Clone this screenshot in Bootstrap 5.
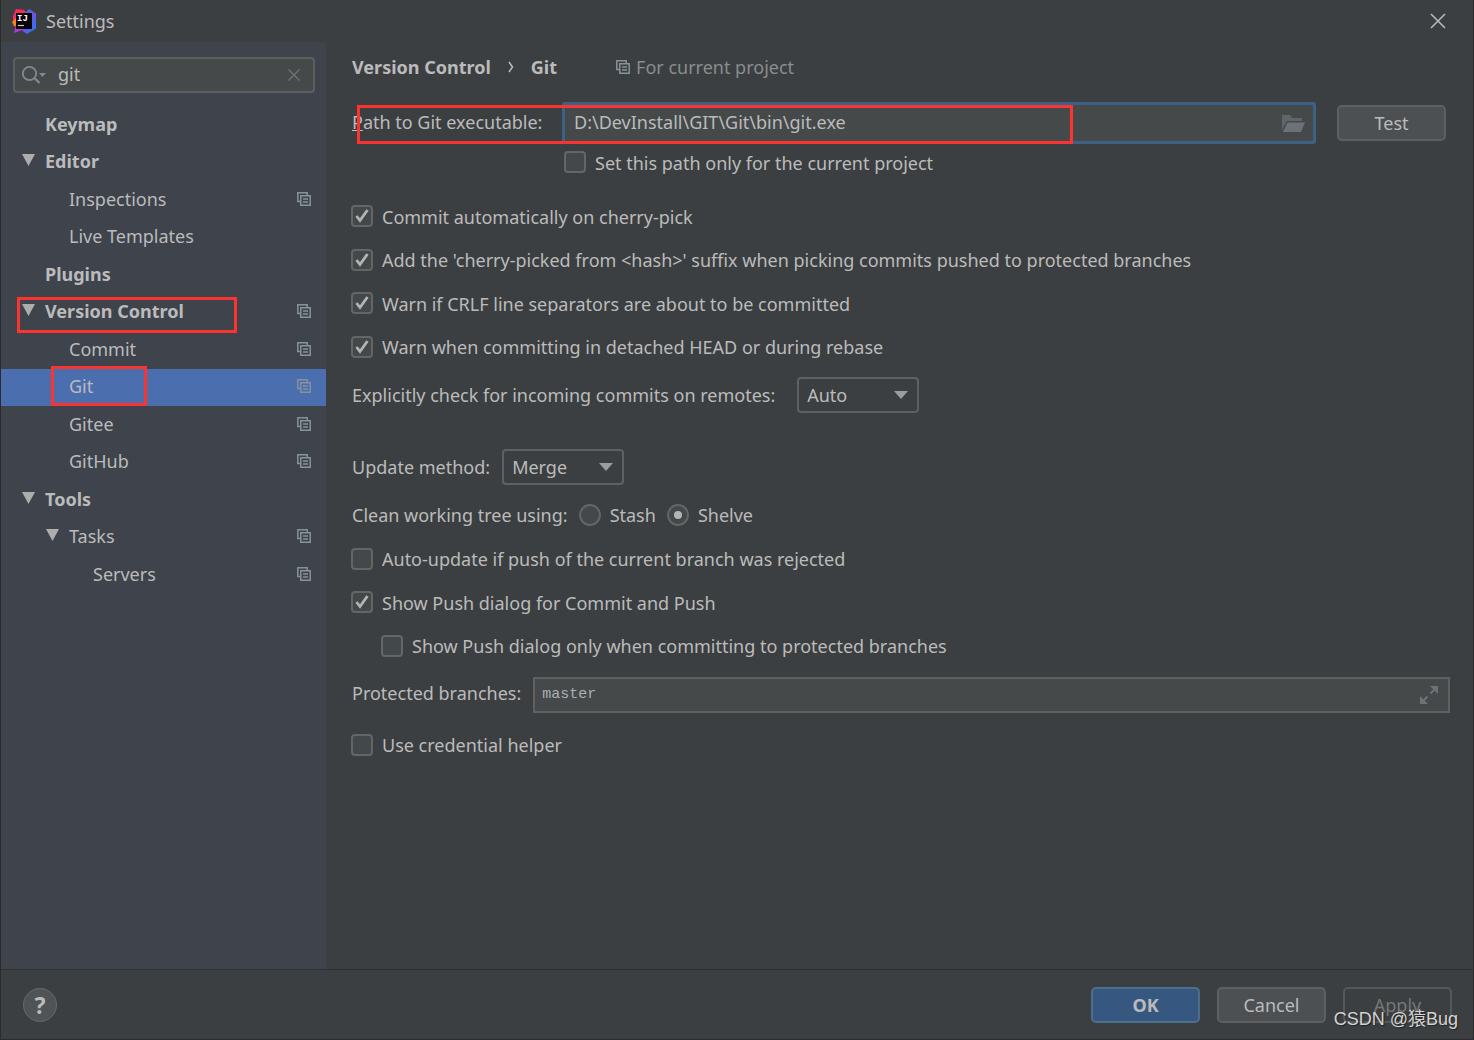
<!DOCTYPE html>
<html lang="en" data-bs-theme="dark">
<head>
<meta charset="utf-8">
<meta name="viewport" content="width=device-width, initial-scale=1">
<title>Settings</title>
<link rel="stylesheet" href="https://cdn.jsdelivr.net/npm/bootstrap@5.3.0/dist/css/bootstrap.min.css">
<style>
  :root {
    --ui-bg: #3c3f41;
    --ui-side: #3e434c;
    --ui-field: #45494a;
    --ui-line: #5f6061;
    --ui-text: #bbbbbb;
    --ui-mark: #fb3432;
  }
  body {
    background: var(--ui-bg);
    color: var(--ui-text);
    font-family: "Noto Sans", "Open Sans", "Noto Sans CJK SC", sans-serif;
    font-size: 18px;
    line-height: 26px;
    border: 1px solid #2b2b2c;
    border-top: 0;
  }
  .title-bar { height: 42px; padding: 0 27px 0 11px; }
  .title-bar .app-logo { margin-right: 9px; }
  .icon-btn { background: none; border: 0; padding: 0; line-height: 0; color: inherit; }

  .side-pane { width: 325px; background: var(--ui-side); padding-top: 15px; }
  .search-box {
    height: 36px; margin: 0 11px 13px 12px; padding: 0 13px 0 7px;
    background: var(--ui-field); border: 2px solid #5c5f60; border-radius: 4px;
  }
  .search-box input {
    background: none; border: 0; outline: 0; color: var(--ui-text); padding: 0 0 2px; min-width: 0;
  }
  .search-box .magnifier { margin-right: 12px; }
  .tree { display: grid; grid-auto-rows: 38px 37px; list-style: none; margin: 0; padding: 0; }
  .tree li { position: relative; }
  .tree a {
    display: flex; align-items: center; height: 100%;
    padding: 0 15px 3px 44px; color: inherit; text-decoration: none;
  }
  .tree .depth-2 a { padding-left: 68px; }
  .tree .depth-3 a { padding-left: 92px; }
  .tree .depth-1 a { font-weight: 700; }
  .tree .selected { background: #4b6eaf; }
  .tree .copy-icon { margin-left: auto; }
  .tree .twisty { width: 13px; height: 12px; margin: 0 10px 2px -23px; fill: #adadad; }

  .marker { position: absolute; border: 3px solid var(--ui-mark); pointer-events: none; }
  .marker-section { left: 16px; top: 3px; width: 220px; height: 36px; z-index: 1; }
  .marker-item { left: 50px; top: -3px; width: 96px; height: 40px; z-index: 1; }
  .marker-path { left: 5px; top: 3px; width: 716px; height: 39px; z-index: 2; }

  .main-pane { padding: 0 23px 0 26px; min-width: 0; }
  .crumbs { height: 50px; margin-bottom: 10px; }
  .crumbs .chevron { margin: 0 17px; }
  .crumbs .hint { color: #8a8c8d; margin-left: 59px; gap: 6px; }
  .path-row { position: relative; padding-right: 4px; }
  .path-label { width: 210px; padding-bottom: 2px; }
  .path-field {
    height: 42px; border: 3px solid #3d6185; border-radius: 3px;
    background: var(--ui-field); padding: 0 8px 0 9px; margin-right: 21px;
  }
  .path-field input {
    background: none; border: 0; outline: 0; padding: 0 0 2px; color: var(--ui-text); min-width: 0;
  }
  .opt-grid { display: grid; grid-auto-rows: 43px 44px; }
  .opt-grid.late { grid-auto-rows: 44px 43px; }
  .opt { display: flex; align-items: center; gap: 9px; margin: 0; }
  .opt-nested { padding-left: 30px; }
  .opt-path { height: 37px; padding-left: 213px; margin-bottom: 14px; }
  .form-check-input, .form-check-input:checked {
    flex: none; width: 22px; height: 22px; margin: 0 0 1px -1px;
    background-color: #43494a; border: 2px solid #636566;
  }
  .form-check-input[type=checkbox] { border-radius: 4px; }
  .form-check-input:checked[type=checkbox] {
    background-size: 18px 18px;
    background-image: url("data:image/svg+xml,%3csvg xmlns='http://www.w3.org/2000/svg' viewBox='0 0 18 18'%3e%3cpath d='M3.5 9l3.5 4.5L14.5 3' fill='none' stroke='%23b4b4b4' stroke-width='2.8'/%3e%3c/svg%3e");
  }
  .form-check-input:checked[type=radio] {
    background-size: 18px 18px;
    background-image: url("data:image/svg+xml,%3csvg xmlns='http://www.w3.org/2000/svg' viewBox='0 0 18 18'%3e%3ccircle cx='9' cy='9' r='4' fill='%23b4b4b4'/%3e%3c/svg%3e");
  }
  .field-row { display: flex; align-items: center; height: 44px; gap: 12px; }
  .incoming-row { margin-top: 4px; gap: 22px; }
  .update-row { margin: 28px 0 4px; }
  .branches-row { margin: 5px 0 15px; }
  .branches-row label { padding-bottom: 4px; }
  .form-select {
    width: 122px; height: 36px; padding: 0 30px 0 8px; font-size: 18px; line-height: 26px;
    color: var(--ui-text); background-color: var(--ui-bg);
    border: 2px solid var(--ui-line); border-radius: 4px;
    background-position: right 9px center; background-size: 14px 8px;
    background-image: url("data:image/svg+xml,%3csvg xmlns='http://www.w3.org/2000/svg' viewBox='0 0 14 8'%3e%3cpath d='M0 0h14L7 8z' fill='%239a9da0'/%3e%3c/svg%3e");
  }
  .branches-field {
    height: 36px; background: var(--ui-field); border: 2px solid var(--ui-line);
    padding: 0 10px 0 7px;
  }
  .branches-field input {
    background: none; border: 0; outline: 0; padding: 0; min-width: 0;
    color: #a9b0b4; font: 15px/22px "Liberation Mono", monospace;
  }

  .ui-btn {
    width: 109px; height: 36px; padding: 0; font-size: 18px; line-height: 32px;
    color: var(--ui-text); background: #4c5052; border: 2px solid #5e6060; border-radius: 5px;
  }
  .ui-btn.primary { background: #365880; border-color: #4c708c; font-weight: 700; }
  .ui-btn:disabled { background: none; color: #777777; border-color: #55585a; opacity: 1; }
  .foot-bar { border-top: 1px solid #2f3234; height: 70px; padding: 0 21px 0 22px; gap: 17px; }
  .help-btn {
    width: 34px; height: 34px; padding: 0; border-radius: 50%; border: 1px solid #66696a;
    background: #4f5355; color: var(--ui-text); font-weight: 700; font-size: 23px; line-height: 30px;
  }
  .watermark {
    position: absolute; right: 15px; bottom: 7px; font: 18px/26px "Liberation Sans", "Noto Sans CJK SC", sans-serif;
    color: #d2d3d3; text-shadow: 1px 1px 1px #222; pointer-events: none;
  }
</style>
<script src="https://cdn.jsdelivr.net/npm/bootstrap@5.3.0/dist/js/bootstrap.bundle.min.js"></script>
</head>
<body class="d-flex flex-column min-vh-100">

<svg class="d-none" aria-hidden="true">
  <symbol id="copy" viewBox="0 0 14 14">
    <path d="M3 9.500H.8V.8h9.400V3" fill="none" stroke="#87939a" stroke-width="1.500"/>
    <path d="M3.800 3.800h9.400v9.400H3.800z" fill="none" stroke="#87939a" stroke-width="1.500"/>
    <path d="M6 7h5M6 10h5" stroke="#87939a" stroke-width="1.400"/>
  </symbol>
  <symbol id="twisty" viewBox="0 0 13 12"><path d="M0 0h13L6.500 12z"/></symbol>
</svg>

<header class="title-bar d-flex align-items-center">
  <svg class="app-logo" width="25" height="25" viewBox="0 0 25 25" aria-hidden="true">
    <defs>
      <linearGradient id="blue" x1="0" y1="0" x2="1" y2="1"><stop offset="0" stop-color="#2f7df6"/><stop offset=".5" stop-color="#6a57e0"/><stop offset="1" stop-color="#1c7cf5"/></linearGradient>
      <linearGradient id="pink" x1="0" y1="0" x2="0" y2="1"><stop offset="0" stop-color="#fe2857"/><stop offset="1" stop-color="#e8326b"/></linearGradient>
    </defs>
    <path d="M13 4l4-4 7 4.500v15L15 25l-7-5z" fill="url(#blue)"/>
    <path d="M1 7L4 0l8 1 4 5-10 8-5-1z" fill="url(#pink)"/>
    <path d="M4 9l-4 4 2 4 4 1z" fill="#fc801d"/>
    <path d="M4 16l-2 8 8-3 3-3z" fill="#b736d9"/>
    <path d="M4 4h16v16H4z" fill="#08040a"/>
    <text x="5" y="12" font-family="Liberation Mono, monospace" font-weight="700" font-size="9" fill="#fff">IJ</text>
    <path d="M6 16.500h6" stroke="#c9c9c9" stroke-width="1.200"/>
  </svg>
  <span class="flex-fill">Settings</span>
  <button class="icon-btn" type="button" aria-label="Close">
    <svg width="16" height="16" viewBox="0 0 16 16"><path d="M1 1l14 14M15 1L1 15" stroke="#bbb" stroke-width="1.500"/></svg>
  </button>
</header>

<div class="d-flex flex-fill">
  <nav class="side-pane flex-shrink-0" aria-label="Settings sections">
    <div class="search-box d-flex align-items-center">
      <svg class="magnifier flex-shrink-0" width="24" height="20" viewBox="0 0 24 20" aria-hidden="true">
        <circle cx="7.500" cy="8.500" r="6.700" fill="none" stroke="#7f8b91" stroke-width="1.800"/>
        <path d="M12.500 13l5 5" stroke="#7f8b91" stroke-width="2.200"/>
        <path d="M17 8h7l-3.500 4z" fill="#7f8b91"/>
      </svg>
      <input class="flex-fill" type="text" value="git" aria-label="Search settings">
      <button class="icon-btn" type="button" aria-label="Clear">
        <svg width="12" height="12" viewBox="0 0 12 12"><path d="M.5.5l11 11M11.500.5l-11 11" stroke="#6e7375" stroke-width="1.400"/></svg>
      </button>
    </div>
    <ul class="tree">
      <li class="depth-1"><a href="#">Keymap</a></li>
      <li class="depth-1"><a href="#"><svg class="twisty"><use href="#twisty"/></svg>Editor</a></li>
      <li class="depth-2"><a href="#">Inspections<svg class="copy-icon" width="14" height="14"><use href="#copy"/></svg></a></li>
      <li class="depth-2"><a href="#">Live Templates</a></li>
      <li class="depth-1"><a href="#">Plugins</a></li>
      <li class="depth-1"><a href="#"><svg class="twisty"><use href="#twisty"/></svg>Version Control<svg class="copy-icon" width="14" height="14"><use href="#copy"/></svg></a><span class="marker marker-section"></span></li>
      <li class="depth-2"><a href="#">Commit<svg class="copy-icon" width="14" height="14"><use href="#copy"/></svg></a></li>
      <li class="depth-2 selected"><a href="#" aria-current="page">Git<svg class="copy-icon" width="14" height="14"><use href="#copy"/></svg></a><span class="marker marker-item"></span></li>
      <li class="depth-2"><a href="#">Gitee<svg class="copy-icon" width="14" height="14"><use href="#copy"/></svg></a></li>
      <li class="depth-2"><a href="#">GitHub<svg class="copy-icon" width="14" height="14"><use href="#copy"/></svg></a></li>
      <li class="depth-1"><a href="#"><svg class="twisty"><use href="#twisty"/></svg>Tools</a></li>
      <li class="depth-2"><a href="#"><svg class="twisty"><use href="#twisty"/></svg>Tasks<svg class="copy-icon" width="14" height="14"><use href="#copy"/></svg></a></li>
      <li class="depth-3"><a href="#">Servers<svg class="copy-icon" width="14" height="14"><use href="#copy"/></svg></a></li>
    </ul>
  </nav>

  <main class="main-pane flex-fill">
    <div class="crumbs d-flex align-items-center">
      <strong>Version Control</strong>
      <svg class="chevron" width="6" height="12" viewBox="0 0 6 12" aria-hidden="true"><path d="M1 1l3.500 5L1 11" fill="none" stroke="#bbb" stroke-width="1.500"/></svg>
      <strong>Git</strong>
      <span class="hint d-flex align-items-center"><svg width="14" height="14"><use href="#copy"/></svg>For current project</span>
    </div>

    <div class="path-row d-flex align-items-center">
      <label class="path-label flex-shrink-0" for="git-path"><u>P</u>ath to Git executable:</label>
      <div class="path-field d-flex align-items-center flex-fill">
        <input class="flex-fill" id="git-path" type="text" value="D:\DevInstall\GIT\Git\bin\git.exe">
        <button class="icon-btn" type="button" aria-label="Browse">
          <svg width="23" height="17" viewBox="0 0 23 17"><path d="M0 0h8l2 3h10v3H5L0 15z" fill="#5f666a"/><path d="M5.500 7.500H23L19 17H1z" fill="#6b7378"/></svg>
        </button>
      </div>
      <button class="ui-btn btn flex-shrink-0" type="button">Test</button>
      <span class="marker marker-path"></span>
    </div>
    <label class="opt opt-path"><input class="form-check-input" type="checkbox">Set this path only for the current project</label>

    <div class="opt-grid">
      <label class="opt"><input class="form-check-input" type="checkbox" checked>Commit automatically on cherry-pick</label>
      <label class="opt"><input class="form-check-input" type="checkbox" checked>Add the 'cherry-picked from &lt;hash&gt;' suffix when picking commits pushed to protected branches</label>
      <label class="opt"><input class="form-check-input" type="checkbox" checked>Warn if CRLF line separators are about to be committed</label>
      <label class="opt"><input class="form-check-input" type="checkbox" checked>Warn when committing in detached HEAD or during rebase</label>
    </div>

    <div class="field-row incoming-row">
      <label for="incoming">Explicitly check for incoming commits on remotes:</label>
      <select class="form-select" id="incoming"><option>Auto</option><option>Always</option><option>Never</option></select>
    </div>
    <div class="field-row update-row">
      <label for="update">Update method:</label>
      <select class="form-select" id="update"><option>Merge</option><option>Rebase</option></select>
    </div>
    <div class="field-row" role="radiogroup" aria-label="Clean working tree using">
      <span>Clean working tree using:</span>
      <label class="opt"><input class="form-check-input" type="radio" name="clean">Stash</label>
      <label class="opt"><input class="form-check-input" type="radio" name="clean" checked>Shelve</label>
    </div>

    <div class="opt-grid late">
      <label class="opt"><input class="form-check-input" type="checkbox">Auto-update if push of the current branch was rejected</label>
      <label class="opt"><input class="form-check-input" type="checkbox" checked>Show Push dialog for Commit and Push</label>
      <label class="opt opt-nested"><input class="form-check-input" type="checkbox">Show Push dialog only when committing to protected branches</label>
    </div>

    <div class="field-row branches-row">
      <label class="flex-shrink-0" for="branches">Protected branches:</label>
      <div class="branches-field d-flex align-items-center flex-fill">
        <input class="flex-fill" id="branches" type="text" value="master">
        <button class="icon-btn" type="button" aria-label="Expand">
          <svg width="18" height="18" viewBox="0 0 18 18"><path d="M10 0h8v8zM0 10v8h8z" fill="#6b7378"/><path d="M10.500 7.500L15 3M3 15l4.500-4.500" stroke="#6b7378" stroke-width="2"/></svg>
        </button>
      </div>
    </div>
    <label class="opt"><input class="form-check-input" type="checkbox">Use credential helper</label>
  </main>
</div>

<footer class="foot-bar d-flex align-items-center position-relative">
  <button class="help-btn me-auto" type="button" aria-label="Help">?</button>
  <button class="ui-btn btn primary" type="button">OK</button>
  <button class="ui-btn btn" type="button">Cancel</button>
  <button class="ui-btn btn" type="button" disabled>Apply</button>
  <span class="watermark">CSDN @猿Bug</span>
</footer>
</body>
</html>
